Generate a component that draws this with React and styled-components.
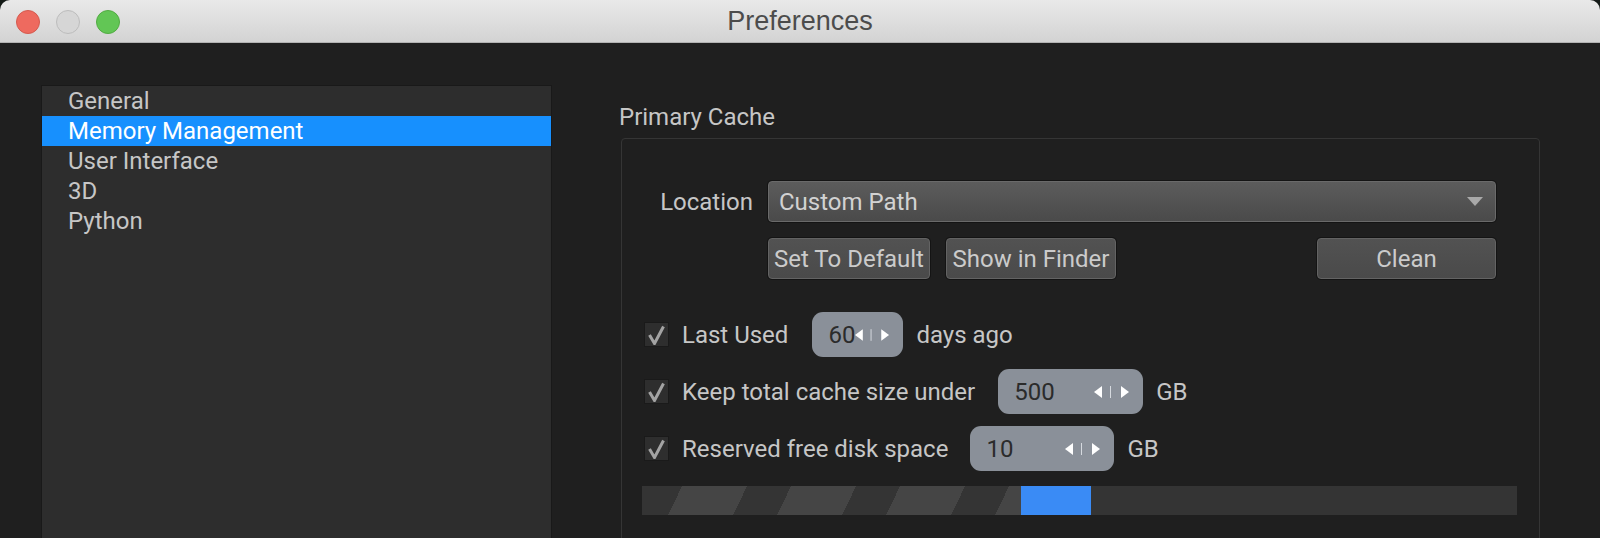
import React from "react";
import styled, { createGlobalStyle } from "styled-components";

const GlobalStyle = createGlobalStyle`
  html, body {
    margin: 0;
    padding: 0;
    background: #141a17;
  }
  body {
    font-family: Roboto, "Noto Sans", sans-serif;
  }
`;

const StyledWindow = styled.div`
  width: 1600px;
  height: 538px;
  display: flex;
  flex-direction: column;
  overflow: hidden;
  background-color: #1f1f1f;
  border-radius: 10px 10px 0 0;
`;

const StyledTitleBar = styled.div`
  position: relative;
  flex: 0 0 42px;
  display: flex;
  align-items: center;
  justify-content: center;
  background: linear-gradient(#e9e9e9, #d3d3d3);
  border-bottom: 1px solid #b3b3b3;
`;

const StyledLights = styled.div`
  position: absolute;
  left: 16px;
  top: 10px;
  display: flex;
  gap: 16px;
`;

const StyledLight = styled.span`
  width: 22px;
  height: 22px;
  border-radius: 50%;
  background-color: ${({ $color }) => $color};
  border: 1px solid ${({ $edge }) => $edge};
`;

const StyledTitle = styled.div`
  font-family: "Liberation Sans", Arial, sans-serif;
  font-size: 27px;
  color: #4c4c4c;
`;

const StyledBody = styled.div`
  flex: 1;
  display: flex;
  align-items: stretch;
  min-height: 0;
`;

const StyledSidebar = styled.div`
  flex: 0 0 509px;
  margin: 42px 0 -10px 41px;
  background-color: #2d2d2d;
  border: 1px solid #191919;
  display: flex;
  flex-direction: column;
`;

const StyledItem = styled.div`
  height: 30px;
  line-height: 30px;
  padding-left: 26px;
  font-size: 24px;
  color: ${({ $active }) => ($active ? "#ffffff" : "#c6c6c6")};
  background-color: ${({ $active }) => ($active ? "#1790fe" : "transparent")};
`;

const StyledMain = styled.div`
  flex: 0 0 921px;
  min-width: 0;
  margin: 60px 0 0 67px;
  display: flex;
  flex-direction: column;
`;

const StyledSectionTitle = styled.div`
  font-size: 24px;
  line-height: 28px;
  color: #c6c6c6;
  margin-bottom: 7px;
`;

const StyledGroupBox = styled.div`
  flex: 1;
  margin-left: 2px;
  margin-bottom: -10px;
  border: 1px solid #353535;
  border-radius: 4px;
  padding: 42px 43px 0 22px;
  display: flex;
  flex-direction: column;
`;

const StyledFormGrid = styled.div`
  display: grid;
  grid-template-columns: 109px 1fr;
  column-gap: 15px;
  row-gap: 16px;
  align-items: center;
`;

const StyledFieldLabel = styled.div`
  font-size: 24px;
  color: #c6c6c6;
  text-align: right;
`;

const StyledCombo = styled.div`
  height: 41px;
  box-sizing: border-box;
  display: flex;
  align-items: center;
  justify-content: space-between;
  padding: 0 12px 0 10px;
  border-radius: 4px;
  border: 1px solid #6a6a6a;
  background: linear-gradient(#5c5c5c, #4a4a4a);
  box-shadow: 0 0 0 1px #141414;
  font-size: 24px;
  color: #d2d2d2;
`;

const StyledButtonBar = styled.div`
  grid-column: 2;
  display: flex;
  gap: 16px;
`;

const StyledButton = styled.div`
  width: ${({ $width }) => $width}px;
  height: 41px;
  margin-left: ${({ $push }) => ($push ? "auto" : "0")};
  display: flex;
  align-items: center;
  justify-content: center;
  border-radius: 4px;
  border: 1px solid #636363;
  background: linear-gradient(#525252, #4a4a4a);
  box-shadow: 0 0 0 1px #141414;
  font-size: 24px;
  color: #cbcbcb;
  box-sizing: border-box;
`;

const StyledOptions = styled.div`
  margin-top: 33px;
  display: flex;
  flex-direction: column;
  gap: 12px;
`;

const StyledOptionRow = styled.div`
  height: 45px;
  display: flex;
  align-items: center;
`;

const StyledCheck = styled.div`
  width: 23px;
  height: 23px;
  flex: 0 0 23px;
  background-color: #2e2e2e;
  border: 1px solid #1a1a1a;
  margin-right: 13px;
  display: flex;
  align-items: center;
  justify-content: center;
`;

const StyledOptionText = styled.div`
  font-size: 24px;
  color: #c6c6c6;
  margin-right: ${({ $space }) => $space}px;
`;

const StyledSpin = styled.div`
  width: ${({ $width }) => $width}px;
  height: 45px;
  box-sizing: border-box;
  display: flex;
  align-items: center;
  padding: 0 13px 0 16px;
  border-radius: 11px;
  background-color: #8a9099;
  margin-right: 13px;
`;

const StyledSpinValue = styled.div`
  flex: 1;
  font-size: 24px;
  color: #2b2b2b;
`;

const StyledBar = styled.div`
  margin: 15px -21px 0 -2px;
  height: 29px;
  display: flex;
  background-color: #343434;
`;

const StyledStripes = styled.div`
  position: relative;
  width: 379px;
  overflow: hidden;
  &::before {
    content: "";
    position: absolute;
    left: 0;
    top: 0;
    width: 420px;
    height: 100%;
    transform-origin: bottom left;
    transform: skewX(-26deg);
    background: repeating-linear-gradient(
      to right,
      #343434 0 26px,
      #454545 26px 91px,
      #343434 91px 109px
    );
  }
`;

const StyledFill = styled.div`
  width: 70px;
  background-color: #3a8bf5;
`;

const CheckMark = () => (
  <svg width="21" height="21" viewBox="0 0 21 21">
    <path d="M3.5 11 L8.5 19.5 L17.5 2.5" fill="none" stroke="#a3a3a3" strokeWidth="3" />
  </svg>
);

const SpinArrows = () => (
  <svg width="36" height="14" viewBox="0 0 36 14">
    <polygon points="0,7 8,1 8,13" fill="#ffffff" />
    <rect x="16" y="1" width="1" height="12" fill="#d6dadf" />
    <polygon points="27,1 35,7 27,13" fill="#ffffff" />
  </svg>
);

const ComboArrow = () => (
  <svg width="16" height="9" viewBox="0 0 16 9">
    <polygon points="0,0 16,0 8,9" fill="#a9a9a9" />
  </svg>
);

const Option = ({ label, space, value, spinWidth, unit }) => (
  <StyledOptionRow>
    <StyledCheck>
      <CheckMark />
    </StyledCheck>
    <StyledOptionText $space={space}>{label}</StyledOptionText>
    <StyledSpin $width={spinWidth}>
      <StyledSpinValue>{value}</StyledSpinValue>
      <SpinArrows />
    </StyledSpin>
    <StyledOptionText $space={0}>{unit}</StyledOptionText>
  </StyledOptionRow>
);

const items = ["General", "Memory Management", "User Interface", "3D", "Python"];

const App = () => {
  return (
    <>
      <GlobalStyle />
      <StyledWindow>
        <StyledTitleBar>
          <StyledLights>
            <StyledLight $color="#ee6a5f" $edge="#d45a4f" />
            <StyledLight $color="#d6d6d6" $edge="#bcbcbc" />
            <StyledLight $color="#62c655" $edge="#52ab43" />
          </StyledLights>
          <StyledTitle>Preferences</StyledTitle>
        </StyledTitleBar>
        <StyledBody>
          <StyledSidebar>
            {items.map((item) => (
              <StyledItem key={item} $active={item === "Memory Management"}>
                {item}
              </StyledItem>
            ))}
          </StyledSidebar>
          <StyledMain>
            <StyledSectionTitle>Primary Cache</StyledSectionTitle>
            <StyledGroupBox>
              <StyledFormGrid>
                <StyledFieldLabel>Location</StyledFieldLabel>
                <StyledCombo>
                  <span>Custom Path</span>
                  <ComboArrow />
                </StyledCombo>
                <StyledButtonBar>
                  <StyledButton $width={162}>Set To Default</StyledButton>
                  <StyledButton $width={170}>Show in Finder</StyledButton>
                  <StyledButton $width={179} $push>
                    Clean
                  </StyledButton>
                </StyledButtonBar>
              </StyledFormGrid>
              <StyledOptions>
                <Option label="Last Used" space={24} value="60" spinWidth={91} unit="days ago" />
                <Option label="Keep total cache size under" space={23} value="500" spinWidth={145} unit="GB" />
                <Option label="Reserved free disk space" space={22} value="10" spinWidth={144} unit="GB" />
              </StyledOptions>
              <StyledBar>
                <StyledStripes />
                <StyledFill />
              </StyledBar>
            </StyledGroupBox>
          </StyledMain>
        </StyledBody>
      </StyledWindow>
    </>
  );
};

export default App;
